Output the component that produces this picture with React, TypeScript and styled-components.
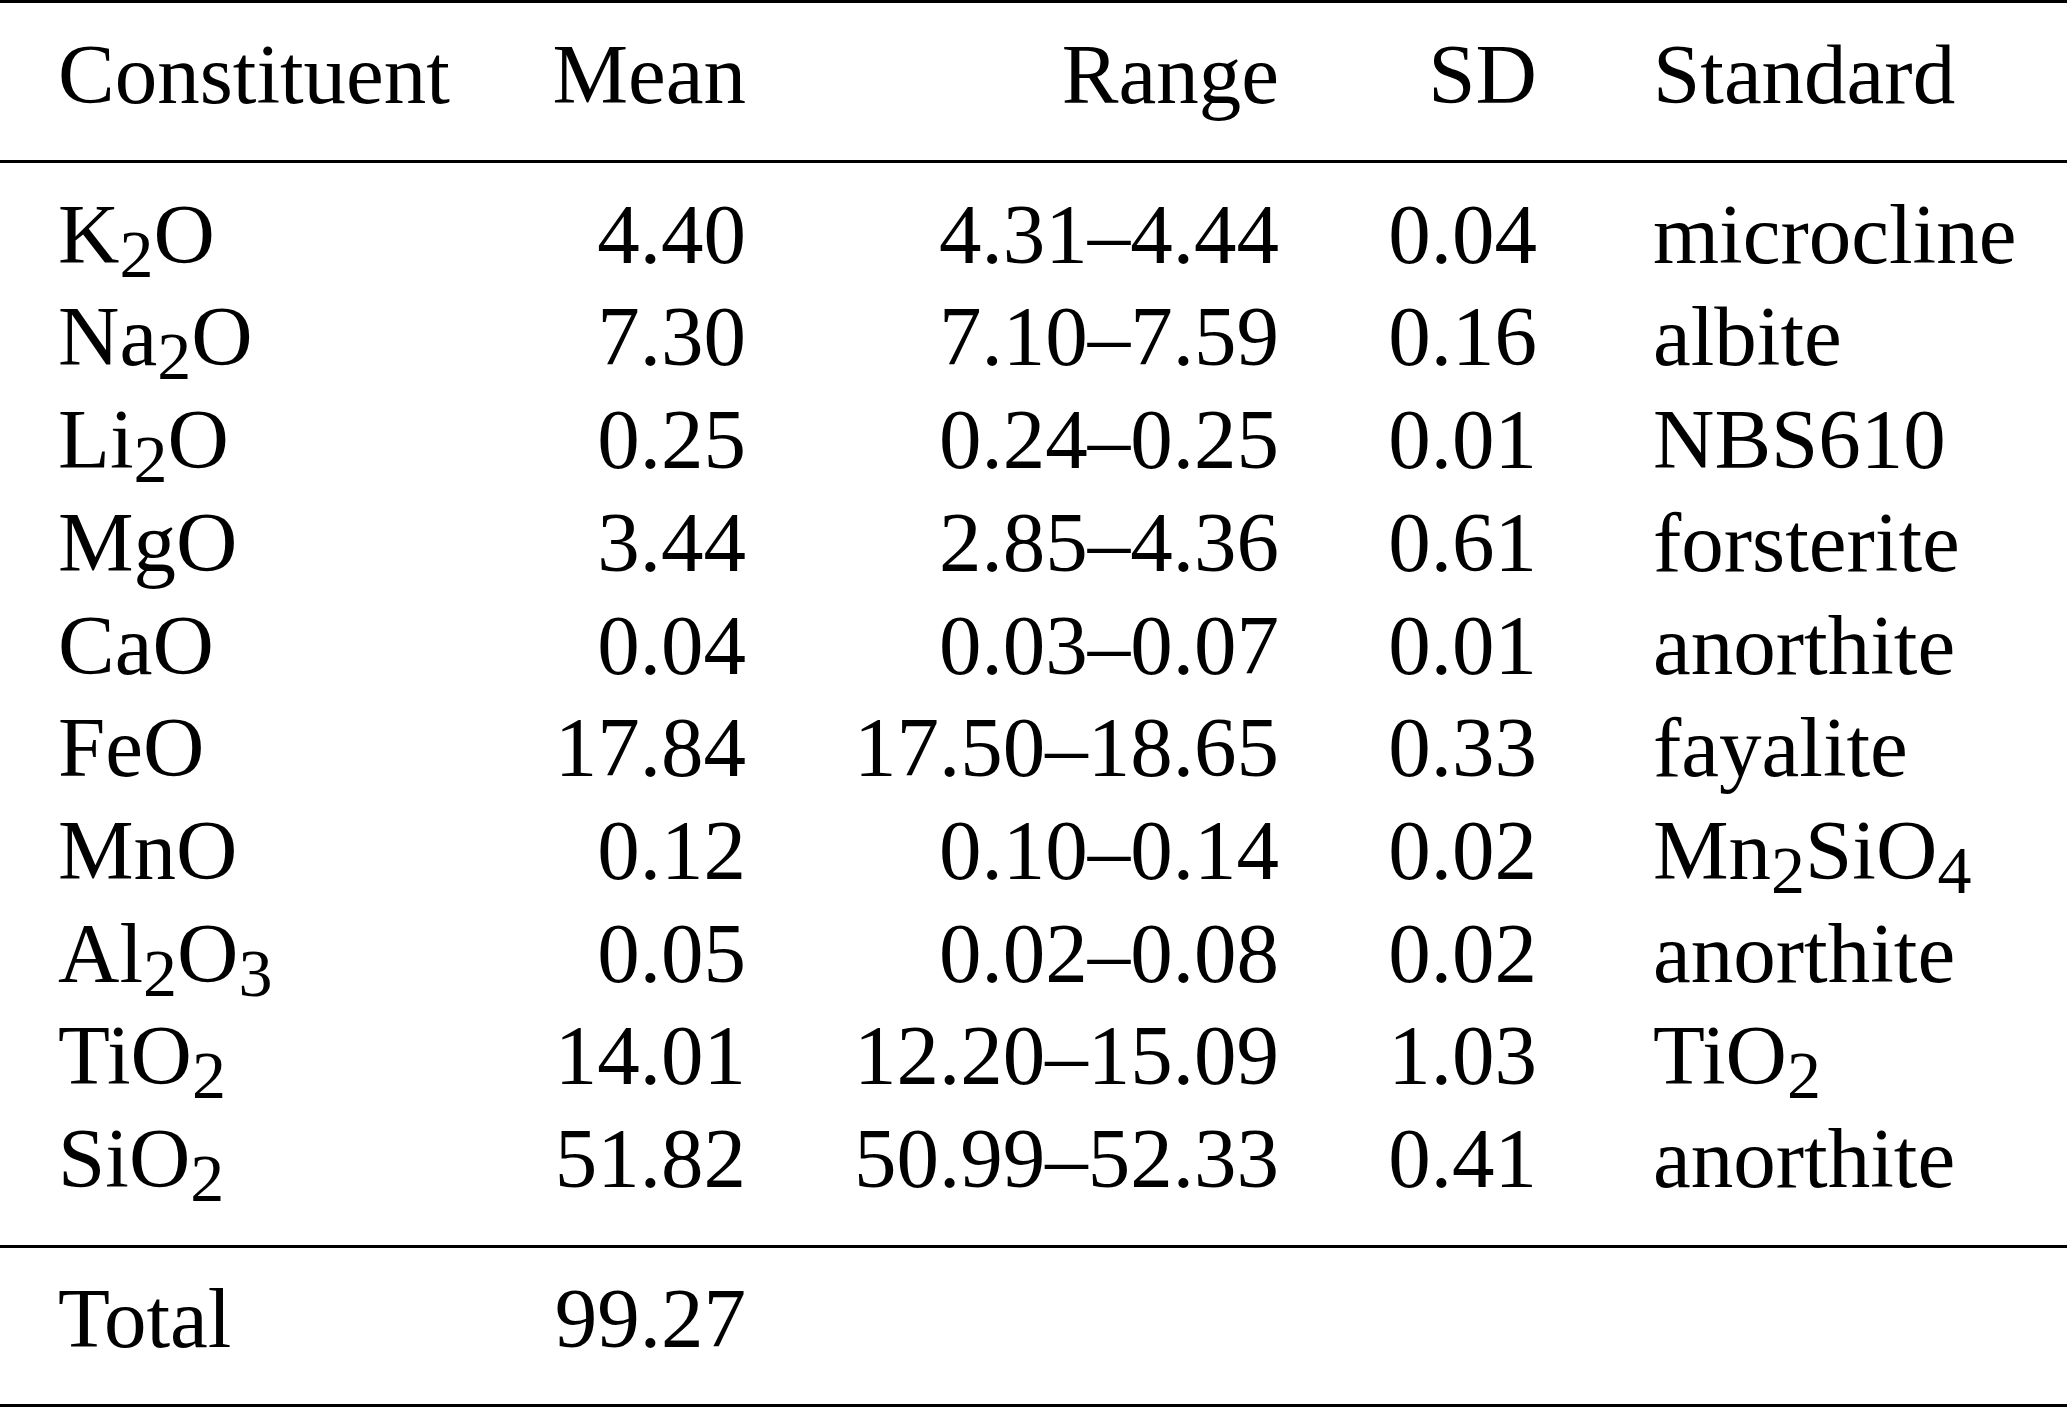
import React from "react";
import styled, { createGlobalStyle } from "styled-components";

const GlobalStyle = createGlobalStyle`
  html, body {
    margin: 0;
    padding: 0;
    background: #fff;
  }
`;

const Table = styled.div`
  width: 2067px;
  font-family: "Liberation Serif", "Times New Roman", serif;
  font-size: 85px;
  line-height: 102.7px;
  color: #000;
  border-top: 3px solid #000;
  border-bottom: 3px solid #000;
`;

const Section = styled.div<{ $top: number; $bottom: number; $ruled?: boolean }>`
  display: grid;
  grid-template-columns: 440px 248px 533px 258px 1fr;
  padding: ${(p) => p.$top}px 0 ${(p) => p.$bottom}px 58px;
  border-bottom: ${(p) => (p.$ruled ? "3px solid #000" : "none")};
`;

const Cell = styled.div<{ $align?: "left" | "right"; $indent?: number }>`
  text-align: ${(p) => p.$align || "left"};
  padding-left: ${(p) => p.$indent || 0}px;
  white-space: nowrap;
`;

const Sub = styled.sub`
  font-size: 0.8em;
  vertical-align: -0.21em;
  line-height: 0;
`;

type Row = {
  name: React.ReactNode;
  mean: string;
  range: string;
  sd: string;
  standard: React.ReactNode;
};

const rows: Row[] = [
  { name: <>K<Sub>2</Sub>O</>, mean: "4.40", range: "4.31–4.44", sd: "0.04", standard: "microcline" },
  { name: <>Na<Sub>2</Sub>O</>, mean: "7.30", range: "7.10–7.59", sd: "0.16", standard: "albite" },
  { name: <>Li<Sub>2</Sub>O</>, mean: "0.25", range: "0.24–0.25", sd: "0.01", standard: "NBS610" },
  { name: "MgO", mean: "3.44", range: "2.85–4.36", sd: "0.61", standard: "forsterite" },
  { name: "CaO", mean: "0.04", range: "0.03–0.07", sd: "0.01", standard: "anorthite" },
  { name: "FeO", mean: "17.84", range: "17.50–18.65", sd: "0.33", standard: "fayalite" },
  {
    name: "MnO",
    mean: "0.12",
    range: "0.10–0.14",
    sd: "0.02",
    standard: <>Mn<Sub>2</Sub>SiO<Sub>4</Sub></>,
  },
  { name: <>Al<Sub>2</Sub>O<Sub>3</Sub></>, mean: "0.05", range: "0.02–0.08", sd: "0.02", standard: "anorthite" },
  { name: <>TiO<Sub>2</Sub></>, mean: "14.01", range: "12.20–15.09", sd: "1.03", standard: <>TiO<Sub>2</Sub></> },
  { name: <>SiO<Sub>2</Sub></>, mean: "51.82", range: "50.99–52.33", sd: "0.41", standard: "anorthite" },
];

const STANDARD_INDENT = 116;

export default function App() {
  return (
    <>
      <GlobalStyle />
      <Table>
        <Section $top={20} $bottom={34} $ruled>
          <Cell>Constituent</Cell>
          <Cell $align="right">Mean</Cell>
          <Cell $align="right">Range</Cell>
          <Cell $align="right">SD</Cell>
          <Cell $indent={STANDARD_INDENT}>Standard</Cell>
        </Section>
        <Section $top={20} $bottom={35} $ruled>
          {rows.map((r, i) => (
            <React.Fragment key={i}>
              <Cell>{r.name}</Cell>
              <Cell $align="right">{r.mean}</Cell>
              <Cell $align="right">{r.range}</Cell>
              <Cell $align="right">{r.sd}</Cell>
              <Cell $indent={STANDARD_INDENT}>{r.standard}</Cell>
            </React.Fragment>
          ))}
        </Section>
        <Section $top={19} $bottom={35}>
          <Cell>Total</Cell>
          <Cell $align="right">99.27</Cell>
          <Cell />
          <Cell />
          <Cell />
        </Section>
      </Table>
    </>
  );
}
